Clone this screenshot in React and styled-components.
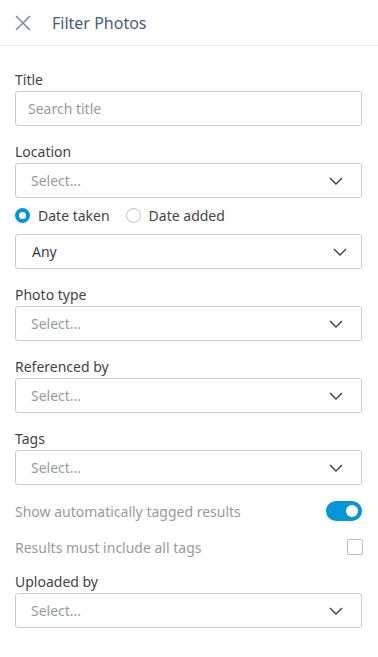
import React, { useState } from 'react'
import styled, { createGlobalStyle } from 'styled-components'

const GlobalStyle = createGlobalStyle`
  body {
    margin: 0;
    background: #ffffff;
    font-family: "Noto Sans", "Open Sans", sans-serif;
    font-size: 14px;
    color: #3c3c3c;
  }
`

const Panel = styled.div`
  width: 378px;
  min-height: 657px;
  background: #fff;
`

const Header = styled.div`
  display: flex;
  align-items: center;
  gap: 21px;
  height: 45px;
  padding: 0 15px;
  border-bottom: 1px solid #e6e9ee;
`

const CloseButton = styled.button`
  display: flex;
  padding: 0;
  border: none;
  background: none;
  cursor: pointer;
`

const HeaderTitle = styled.h1`
  margin: 0;
  font-size: 16px;
  font-weight: 400;
  color: #4a5c7a;
`

const Body = styled.div`
  display: flex;
  flex-direction: column;
  padding: 25px 16px 0 15px;
`

const Field = styled.div`
  display: flex;
  flex-direction: column;
  gap: 2px;
  margin-bottom: ${p => p.$gap ?? 17}px;
`

const Label = styled.label`
  font-size: 14px;
  line-height: 18px;
  color: #444444;
`

const Input = styled.input`
  box-sizing: border-box;
  height: 35px;
  width: 100%;
  padding: 0 12px;
  border: 1px solid #cccccc;
  border-radius: 3px;
  font-family: inherit;
  font-size: 14px;
  color: #3c3c3c;
  outline: none;

  &::placeholder {
    color: #9a9a9a;
  }
`

const SelectBox = styled.div`
  box-sizing: border-box;
  display: flex;
  align-items: center;
  justify-content: space-between;
  height: 35px;
  padding: 0 ${p => (p.$value ? 14 : 18)}px 0 ${p => (p.$value ? 16 : 15)}px;
  border: 1px solid #cccccc;
  border-radius: 3px;
  color: ${p => (p.$value ? '#3c3c3c' : '#9a9a9a')};
  cursor: pointer;
`

const RadioRow = styled.div`
  display: flex;
  align-items: center;
  gap: 16px;
  height: 18px;
  margin: 0 0 10px;
`

const RadioOption = styled.label`
  display: flex;
  align-items: center;
  gap: 8px;
  color: #444444;
  cursor: pointer;
`

const RadioDot = styled.span`
  box-sizing: border-box;
  width: 15px;
  height: 15px;
  border-radius: 50%;
  border: ${p => (p.$checked ? '4px solid #0696d7' : '1px solid #bdbdbd')};
  background: #fff;
`

const OptionRow = styled.div`
  display: flex;
  align-items: center;
  justify-content: space-between;
  height: 20px;
  margin-bottom: ${p => p.$gap}px;
  color: #9a9a9a;
`

const Toggle = styled.button`
  position: relative;
  width: 36px;
  height: 20px;
  padding: 0;
  border: none;
  border-radius: 10px;
  background: ${p => (p.$on ? '#0696d7' : '#cccccc')};
  cursor: pointer;

  &::after {
    content: '';
    position: absolute;
    top: 4px;
    left: ${p => (p.$on ? '20px' : '4px')};
    width: 12px;
    height: 12px;
    border-radius: 50%;
    background: #fff;
  }
`

const Checkbox = styled.span`
  box-sizing: border-box;
  width: 16px;
  height: 16px;
  border: 1px solid #bdbdbd;
  border-radius: 2px;
  margin-right: -1px;
`

const Chevron = () => (
  <svg width="14" height="8" viewBox="0 0 14 8" fill="none">
    <path d="M1 1l6 6 6-6" stroke="#3c3c3c" strokeWidth="1.4" />
  </svg>
)

const Select = ({ value, placeholder = 'Select...' }) => (
  <SelectBox $value={value}>
    <span>{value || placeholder}</span>
    <Chevron />
  </SelectBox>
)

export default function App() {
  const [dateMode, setDateMode] = useState('taken')
  const [autoTags, setAutoTags] = useState(true)

  return (
    <Panel>
      <GlobalStyle />
      <Header>
        <CloseButton aria-label="Close">
          <svg width="16" height="16" viewBox="0 0 16 16">
            <path d="M1 1l14 14M15 1L1 15" stroke="#808a96" strokeWidth="1.5" />
          </svg>
        </CloseButton>
        <HeaderTitle>Filter Photos</HeaderTitle>
      </Header>
      <Body>
        <Field>
          <Label>Title</Label>
          <Input placeholder="Search title" />
        </Field>
        <Field $gap={8}>
          <Label>Location</Label>
          <Select />
        </Field>
        <RadioRow>
          <RadioOption onClick={() => setDateMode('taken')}>
            <RadioDot $checked={dateMode === 'taken'} />
            Date taken
          </RadioOption>
          <RadioOption onClick={() => setDateMode('added')}>
            <RadioDot $checked={dateMode === 'added'} />
            Date added
          </RadioOption>
        </RadioRow>
        <Field>
          <Select value="Any" />
        </Field>
        <Field>
          <Label>Photo type</Label>
          <Select />
        </Field>
        <Field>
          <Label>Referenced by</Label>
          <Select />
        </Field>
        <Field $gap={16}>
          <Label>Tags</Label>
          <Select />
        </Field>
        <OptionRow $gap={16}>
          <span>Show automatically tagged results</span>
          <Toggle $on={autoTags} onClick={() => setAutoTags(!autoTags)} />
        </OptionRow>
        <OptionRow $gap={16}>
          <span>Results must include all tags</span>
          <Checkbox />
        </OptionRow>
        <Field>
          <Label>Uploaded by</Label>
          <Select />
        </Field>
      </Body>
    </Panel>
  )
}
